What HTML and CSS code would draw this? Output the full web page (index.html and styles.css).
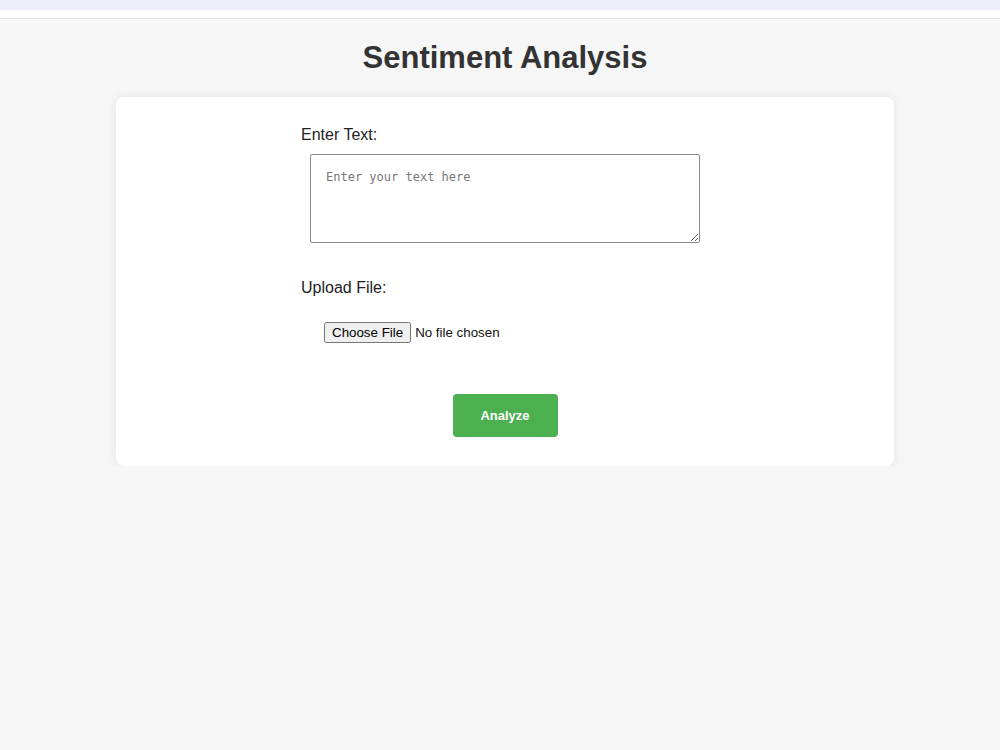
FILE: index.html
```html
<!DOCTYPE html>
<html>
<head>
<title>Sentiment Analysis</title>
<link rel="stylesheet" href="styles.css">
</head>
<body>
<div class="topbar"></div>
<div class="page">
  <h1>Sentiment Analysis</h1>
  <div class="card">
    <form class="form">
      <label class="label" for="text">Enter Text:</label>
      <textarea id="text" class="text" placeholder="Enter your text here"></textarea>
      <label class="label upload" for="file">Upload File:</label>
      <input id="file" class="file" type="file">
      <div class="actions">
        <button type="button" class="analyze">Analyze</button>
      </div>
    </form>
  </div>
</div>
</body>
</html>
```

FILE: styles.css
```css
body {
  margin: 0;
  font-family: "Liberation Sans", Arial, sans-serif;
  background-color: #f6f6f6;
  color: #333;
}

.topbar {
  height: 10px;
  background-color: #eceef8;
  border-bottom: 8px solid #fff;
}

.page {
  border-top: 1px solid #e6e6e6;
  padding: 20px 0 0 10px;
}

h1 {
  margin: 0 0 21px;
  text-align: center;
  font-size: 31px;
  line-height: 37px;
  color: #333;
}

.card {
  width: 778px;
  margin: 0 auto;
  box-sizing: border-box;
  padding: 29px 0 29px;
  background-color: #fff;
  border-radius: 8px;
  box-shadow: 0 0 10px rgba(0, 0, 0, 0.08);
}

.form {
  width: 408px;
  margin: 0 auto;
  display: flex;
  flex-direction: column;
}

.label {
  font-size: 16px;
  line-height: 18px;
  color: #222;
}

.text {
  display: block;
  width: 390px;
  height: 89px;
  box-sizing: border-box;
  margin: 10px auto 0;
  padding: 15px;
  border: 1px solid #8a8a8a;
  border-radius: 2px;
  font-family: "DejaVu Sans Mono", monospace;
  font-size: 12px;
}

.text::placeholder {
  color: #777;
}

.upload {
  margin-top: 36px;
}

.file {
  margin: 25px 0 0 23px;
  font-family: "Liberation Sans", Arial, sans-serif;
  font-size: 13.33px;
  color: #111;
}

.actions {
  margin-top: 51px;
  display: flex;
  justify-content: center;
}

.analyze {
  width: 105px;
  height: 43px;
  border: none;
  border-radius: 4px;
  background-color: #4caf50;
  color: #fff;
  font-family: "Liberation Sans", Arial, sans-serif;
  font-size: 13px;
  font-weight: bold;
}
```
